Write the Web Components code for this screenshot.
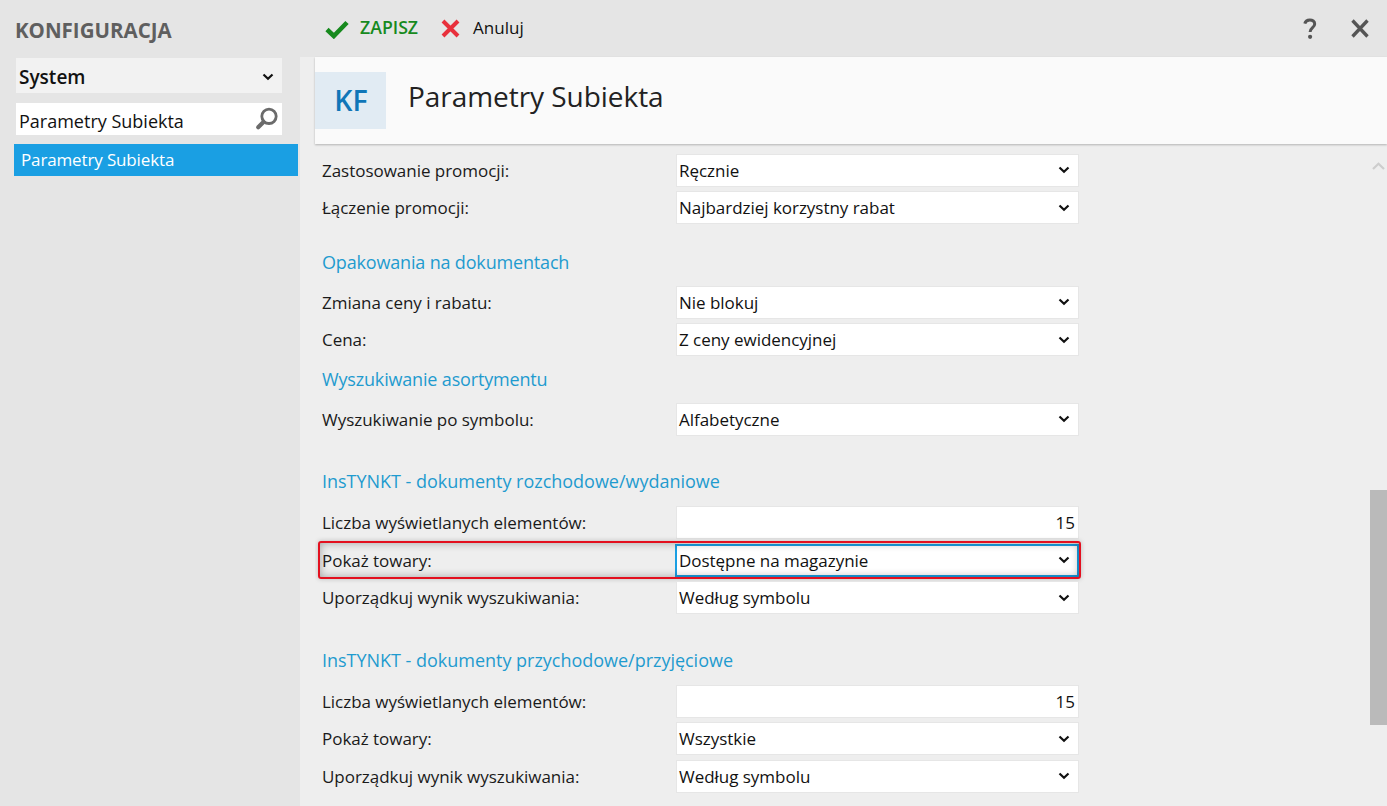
<!DOCTYPE html>
<html lang="pl">
<head>
<meta charset="utf-8">
<title>Konfiguracja</title>
<style>
  html, body { margin: 0; height: 100%; overflow: hidden; }
  body { font-family: "Open Sans", "Noto Sans", sans-serif; color: #111; }
</style>
</head>
<body>
<config-app>
  <side-panel slot="side" title-text="KONFIGURACJA" group="System" search="Parametry Subiekta" item="Parametry Subiekta"></side-panel>
  <tool-bar slot="tools"></tool-bar>
  <page-header slot="head" code="KF" text="Parametry Subiekta"></page-header>
  <form-row label="Zastosowanie promocji:" value="Ręcznie"></form-row>
  <form-row label="Łączenie promocji:" value="Najbardziej korzystny rabat"></form-row>
  <form-heading top="21.5" bottom="11.5" tight>Opakowania na dokumentach</form-heading>
  <form-row label="Zmiana ceny i rabatu:" value="Nie blokuj"></form-row>
  <form-row label="Cena:" value="Z ceny ewidencyjnej"></form-row>
  <form-heading top="6.5" bottom="11.5" tight>Wyszukiwanie asortymentu</form-heading>
  <form-row label="Wyszukiwanie po symbolu:" value="Alfabetyczne"></form-row>
  <form-heading top="28.2" bottom="13.5">InsTYNKT - dokumenty rozchodowe/wydaniowe</form-heading>
  <form-row label="Liczba wyświetlanych elementów:" value="15" number></form-row>
  <form-row label="Pokaż towary:" value="Dostępne na magazynie" marked></form-row>
  <form-row label="Uporządkuj wynik wyszukiwania:" value="Według symbolu"></form-row>
  <form-heading top="29.6" bottom="12.5">InsTYNKT - dokumenty przychodowe/przyjęciowe</form-heading>
  <form-row label="Liczba wyświetlanych elementów:" value="15" number></form-row>
  <form-row label="Pokaż towary:" value="Wszystkie"></form-row>
  <form-row label="Uporządkuj wynik wyszukiwania:" value="Według symbolu"></form-row>
</config-app>

<script>
  const chevron = `<svg width="12" height="8" viewBox="0 0 12 8"><path d="M1.5 1.5 6 5.8 10.5 1.5" fill="none" stroke="#111" stroke-width="2.2"/></svg>`;

  class ConfigApp extends HTMLElement {
    constructor() {
      super();
      this.attachShadow({ mode: 'open' }).innerHTML = `
        <style>
          :host { display: grid; grid-template-columns: 300px 1fr; grid-template-rows: 57px 1fr; width: 1387px; height: 806px; background: #e5e5e5; overflow: hidden; }
          .side { grid-row: 1 / 3; }
          .tools { grid-column: 2; }
          .main { grid-column: 2; display: flex; flex-direction: column; background: #eee; padding-left: 15px; min-height: 0; }
          .body { flex: 1; display: flex; min-height: 0; }
          .form { flex: 1; display: flex; flex-direction: column; padding: 9.9px 0 0 0; overflow: hidden; }
        </style>
        <div class="side"><slot name="side"></slot></div>
        <div class="tools"><slot name="tools"></slot></div>
        <div class="main">
          <slot name="head"></slot>
          <div class="body">
            <div class="form"><slot></slot></div>
            <scroll-bar></scroll-bar>
          </div>
        </div>`;
    }
  }

  class SidePanel extends HTMLElement {
    connectedCallback() {
      const a = n => this.getAttribute(n);
      this.attachShadow({ mode: 'open' }).innerHTML = `
        <style>
          :host { display: flex; flex-direction: column; height: 100%; }
          h1 { margin: 0; padding: 18px 0 0 15px; height: 40px; font-size: 20.5px; line-height: 24px; font-weight: 700; color: #5f5f5f; }
          .group { margin: 0 18px 0 16px; height: 35px; background: #f2f2f2; display: flex; align-items: center; justify-content: space-between; padding: 2px 8px 0 3px; box-sizing: border-box; font-size: 19px; font-weight: 600; color: #111; }
          .search { margin: 10px 18px 0 16px; height: 32px; box-sizing: border-box; background: #fff; display: flex; align-items: center; justify-content: space-between; padding: 3px 3px 0; font-size: 18px; }
          .search svg { margin-top: -3px; }
          .item { margin: 9px 2px 0 14px; height: 31.5px; background: #1a9fe3; color: #fff; display: flex; align-items: center; padding: 0 7px; font-size: 17px; letter-spacing: -.14px; }
          .group svg { display: block; }
        </style>
        <h1>${a('title-text')}</h1>
        <div class="group"><span>${a('group')}</span>${chevron}</div>
        <div class="search"><span>${a('search')}</span>
          <svg width="24" height="24" viewBox="0 0 24 24"><circle cx="14" cy="9.3" r="7.2" fill="#fff" stroke="#6b6b6b" stroke-width="2.8"/><path d="M8.5 15 3.2 20.3" stroke="#6b6b6b" stroke-width="4.2" stroke-linecap="round"/></svg>
        </div>
        <div class="item">${a('item')}</div>`;
    }
  }

  class ToolBar extends HTMLElement {
    constructor() {
      super();
      this.attachShadow({ mode: 'open' }).innerHTML = `
        <style>
          :host { display: flex; align-items: center; height: 57px; box-sizing: border-box; padding: 0 18px 3px 25px; }
          span { font-size: 17px; }
          .save { color: #178a1e; font-weight: 600; font-size: 17.7px; margin: 0 23px 0 11px; }
          .cancel { margin-left: 13px; flex: 1; }
          svg { display: block; margin-top: 3px; }
          .help { margin-right: 34px; }
        </style>
        <svg width="24" height="20" viewBox="0 0 24 20"><path d="M2 10.5 8.8 17 22 3.5" fill="none" stroke="#178a1e" stroke-width="4.6"/></svg>
        <span class="save">ZAPISZ</span>
        <svg width="19" height="19" viewBox="0 0 19 19"><path d="M2 2 17 17M17 2 2 17" fill="none" stroke="#e8303c" stroke-width="4"/></svg>
        <span class="cancel">Anuluj</span>
        <svg class="help" width="14" height="22" viewBox="0 0 14 22"><path d="M1.8 5.6C2.4 2.9 4.4 1.9 6.8 1.9c2.8 0 4.9 1.5 4.9 4 0 3.8-4.6 3.6-4.6 8.1" fill="none" stroke="#555" stroke-width="3"/><circle cx="7.1" cy="18.8" r="2.1" fill="#555"/></svg>
        <svg width="18" height="19" viewBox="0 0 18 19"><path d="M1.5 1.5 16.5 17.5M16.5 1.5 1.5 17.5" fill="none" stroke="#555" stroke-width="3.3"/></svg>`;
    }
  }

  class PageHeader extends HTMLElement {
    connectedCallback() {
      this.attachShadow({ mode: 'open' }).innerHTML = `
        <style>
          :host { display: flex; align-items: center; flex: none; height: 87px; background: #fafafa; box-shadow: 0 1px 2px rgba(0,0,0,.25); position: relative; }
          .code { width: 71px; height: 57px; background: #e1ebf3; color: #0f76b8; font-size: 28.5px; font-weight: 600; display: flex; align-items: center; justify-content: center; padding: 0 0 2px 1px; box-sizing: border-box; }
          .text { margin: 0 0 9px 22px; font-size: 28px; letter-spacing: -.05px; color: #222; }
        </style>
        <div class="code">${this.getAttribute('code')}</div>
        <div class="text">${this.getAttribute('text')}</div>`;
    }
  }

  class FormHeading extends HTMLElement {
    connectedCallback() {
      this.attachShadow({ mode: 'open' }).innerHTML = `
        <style>
          :host { display: block; flex: none; height: 24px; line-height: 24px; margin: ${this.getAttribute('top')}px 0 ${this.getAttribute('bottom')}px 7px; color: #1f9bcf; font-size: 18px; letter-spacing: -.02px; }
          :host([tight]) { letter-spacing: -.17px; }
        </style><slot></slot>`;
    }
  }

  class FormRow extends HTMLElement {
    connectedCallback() {
      const number = this.hasAttribute('number');
      const marked = this.hasAttribute('marked');
      this.attachShadow({ mode: 'open' }).innerHTML = `
        <style>
          :host { display: flex; flex: none; align-items: stretch; height: 33px; margin: 0 0 4.5px 7px; width: 757px; position: relative; font-size: 17px; letter-spacing: -.03px; }
          .label { width: 354px; flex: none; display: flex; align-items: center; color: #1a1a1a; }
          .box { flex: 1; box-sizing: border-box; background: #fff; border: 1px solid #e6e6e6; display: flex; align-items: center; justify-content: space-between; padding: 0 8px 0 2px; }
          .box.num { justify-content: flex-end; padding-right: 3px; }
          .marked { position: absolute; inset: -3px -2px -2.5px -4px; border: 2px solid #e3101f; border-radius: 3px; pointer-events: none; box-shadow: 0 0 5px rgba(0,0,0,.22), inset 0 0 9px rgba(0,0,0,.32); }
          :host([marked]) .box { border: 2px solid #1a9fe3; margin-left: -1px; padding-left: 2px; padding-right: 7px; }
        </style>
        <div class="label">${this.getAttribute('label')}</div>
        <div class="box ${number ? 'num' : ''}"><span>${this.getAttribute('value')}</span>${number ? '' : chevron}</div>
        ${marked ? '<div class="marked"></div>' : ''}`;
    }
  }

  class ScrollBar extends HTMLElement {
    constructor() {
      super();
      this.attachShadow({ mode: 'open' }).innerHTML = `
        <style>
          :host { display: flex; flex-direction: column; align-items: center; width: 17px; flex: none; }
          svg { display: block; margin-top: 18px; }
          .thumb { margin-top: 320px; width: 17px; height: 235px; background: #bababa; }
        </style>
        <svg width="13" height="8" viewBox="0 0 13 8"><path d="M1 7 6.5 1.8 12 7" fill="none" stroke="#cdcdcd" stroke-width="2.2"/></svg>
        <div class="thumb"></div>`;
    }
  }

  customElements.define('config-app', ConfigApp);
  customElements.define('side-panel', SidePanel);
  customElements.define('tool-bar', ToolBar);
  customElements.define('page-header', PageHeader);
  customElements.define('form-heading', FormHeading);
  customElements.define('form-row', FormRow);
  customElements.define('scroll-bar', ScrollBar);
</script>
</body>
</html>
